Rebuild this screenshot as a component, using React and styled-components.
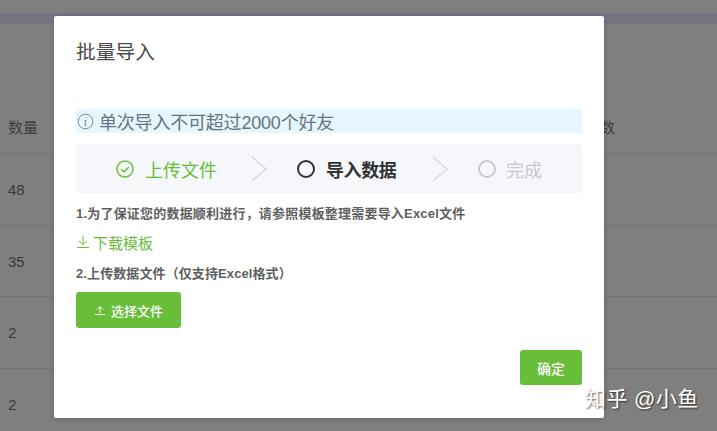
import React from 'react'
import styled, { createGlobalStyle } from 'styled-components'

const GlobalStyle = createGlobalStyle`
  html, body {
    margin: 0;
    padding: 0;
    height: 100%;
    overflow: hidden;
    background: #7f7f7f;
    font-family: "Liberation Sans", "Noto Sans CJK SC", sans-serif;
  }
`

const Page = styled.div`
  position: relative;
  width: 717px;
  height: 431px;
  overflow: hidden;
  background: #7f7f7f;
`

const TopBar = styled.div`
  height: 11px;
  margin-top: 13px;
  background: #77757f;
`

const Table = styled.div`
  display: flex;
  flex-direction: column;
  padding-top: 81px;
`

const HeadRow = styled.div`
  display: flex;
  justify-content: space-between;
  height: 48px;
  padding: 0 0 0 8px;
  border-bottom: 1px solid #757575;
  color: #3f3f3f;
  font-size: 15px;
  line-height: 45px;
`

const LastHead = styled.span`
  margin-right: 102px;
`

const Row = styled.div`
  height: 70.5px;
  padding-left: 8px;
  border-bottom: 1px solid #757575;
  color: #3a3a3a;
  font-size: 15px;
  line-height: 71px;
`

const Modal = styled.div`
  position: absolute;
  left: 54px;
  top: 16px;
  width: 550px;
  height: 402px;
  box-sizing: border-box;
  padding: 0 22px;
  display: flex;
  flex-direction: column;
  background: #fff;
  border-radius: 2px;
  box-shadow: 0 1px 6px rgba(0, 0, 0, 0.2);
`

const Title = styled.h2`
  margin: 24px 0 0;
  height: 69px;
  color: #4c4c4c;
  font-size: 19.8px;
  font-weight: 400;
  line-height: 24px;
`

const Notice = styled.div`
  display: flex;
  align-items: center;
  gap: 5px;
  height: 24px;
  padding-left: 1px;
  background: #e6f6fe;
  color: #66747f;
  font-size: 18px;
  letter-spacing: -0.2px;
`

const Steps = styled.div`
  display: flex;
  align-items: center;
  height: 49px;
  margin-top: 11px;
  padding-left: 40px;
  background: #f5f7fa;
  border-radius: 3px;
`

const Step = styled.div`
  display: flex;
  align-items: center;
  gap: ${p => p.$gap}px;
  width: ${p => p.$width}px;
  color: ${p => p.$color};
  font-size: 18px;
  font-weight: ${p => (p.$bold ? 700 : 400)};
  letter-spacing: ${p => (p.$bold ? -0.4 : 0)}px;
`

const Chevron = styled.svg`
  flex: none;
  width: 16px;
  height: 28px;
  margin-right: 30px;
`

const Line = styled.p`
  margin: ${p => p.$top}px 0 0;
  color: #5f5f5f;
  font-size: 13px;
  font-weight: 700;
  letter-spacing: ${p => p.$spacing}px;
  line-height: 18px;
`

const DownloadLink = styled.a`
  display: flex;
  align-items: center;
  gap: 3px;
  margin-top: 10px;
  height: 18px;
  color: #68be39;
  font-size: 15px;
`

const Button = styled.button`
  display: flex;
  align-items: center;
  justify-content: center;
  gap: 5px;
  width: ${p => p.$width}px;
  height: ${p => p.$height}px;
  padding: 0;
  border: 0;
  border-radius: 3px;
  background: #68be39;
  color: #fff;
  font-family: inherit;
  font-size: ${p => p.$size}px;
  font-weight: 500;
`

const Upload = styled(Button)`
  margin-top: 9px;
`

const Footer = styled.div`
  display: flex;
  justify-content: flex-end;
  margin-top: 22px;
`

const Watermark = styled.div`
  position: absolute;
  left: 585px;
  top: 386px;
  color: #fff;
  font-size: 21px;
  letter-spacing: 0.4px;
  line-height: 26px;
  white-space: nowrap;
  text-shadow: 1px 1px 2px rgba(0, 0, 0, 0.65);
`

const InfoIcon = () => (
  <svg width="17" height="17" viewBox="0 0 17 17" fill="none" stroke="#7d8b96" strokeWidth="1">
    <circle cx="8.5" cy="8.5" r="7.3" />
    <path d="M9.4 4.3v1.3M7.3 7.5h1.7l-1.300 4.700h1.700" />
  </svg>
)

const DoneIcon = () => (
  <svg width="18" height="18" viewBox="0 0 18 18" fill="none" stroke="#68be39" strokeWidth="1.5">
    <circle cx="9" cy="9" r="8" />
    <path d="M5.2 9.200l2.800 2.700 4.800-5" />
  </svg>
)

const Ring = ({ color }) => (
  <svg width="18" height="18" viewBox="0 0 18 18" fill="none" stroke={color} strokeWidth="2">
    <circle cx="9" cy="9" r="8" />
  </svg>
)

const StepArrow = () => (
  <Chevron viewBox="0 0 16 28" fill="none" stroke="#d4d6da" strokeWidth="1.2">
    <path d="M1 2l14 12L1 26" />
  </Chevron>
)

const DownloadIcon = () => (
  <svg width="14" height="14" viewBox="0 0 14 14" fill="none" stroke="#68be39" strokeWidth="1">
    <path d="M7 1v8M3 5.800l4 3.700 4-3.700M1 12.500h12" />
  </svg>
)

const UploadIcon = () => (
  <svg width="12" height="12" viewBox="0 0 12 12" fill="none" stroke="#fff" strokeWidth="1">
    <path d="M6 9V3M3 5.500L6 2.500l3 3M1 10.500h10" />
  </svg>
)

const App = () => {
  const rows = [48, 35, 2, 2]
  return (
    <Page>
      <GlobalStyle />
      <TopBar />
      <Table>
        <HeadRow>
          <span>数量</span>
          <LastHead>数</LastHead>
        </HeadRow>
        {rows.map((n, i) => (
          <Row key={i}>{n}</Row>
        ))}
      </Table>

      <Modal>
        <Title>批量导入</Title>
        <Notice>
          <InfoIcon />
          单次导入不可超过2000个好友
        </Notice>
        <Steps>
          <Step $gap={11} $width={135} $color="#68be39">
            <DoneIcon />
            上传文件
          </Step>
          <StepArrow />
          <Step $gap={11} $width={135} $color="#303133" $bold>
            <Ring color="#303133" />
            导入数据
          </Step>
          <StepArrow />
          <Step $gap={10} $color="#c6c9ce">
            <Ring color="#c6c9ce" />
            完成
          </Step>
        </Steps>
        <Line $top={12} $spacing={0.2}>1.为了保证您的数据顺利进行，请参照模板整理需要导入Excel文件</Line>
        <DownloadLink>
          <DownloadIcon />
          下载模板
        </DownloadLink>
        <Line $top={14} $spacing={0.1}>2.上传数据文件（仅支持Excel格式）</Line>
        <Upload $width={105} $height={36} $size={13}>
          <UploadIcon />
          选择文件
        </Upload>
        <Footer>
          <Button $width={62} $height={35} $size={14}>确定</Button>
        </Footer>
      </Modal>

      <Watermark>知乎 @小鱼</Watermark>
    </Page>
  )
}

export default App
